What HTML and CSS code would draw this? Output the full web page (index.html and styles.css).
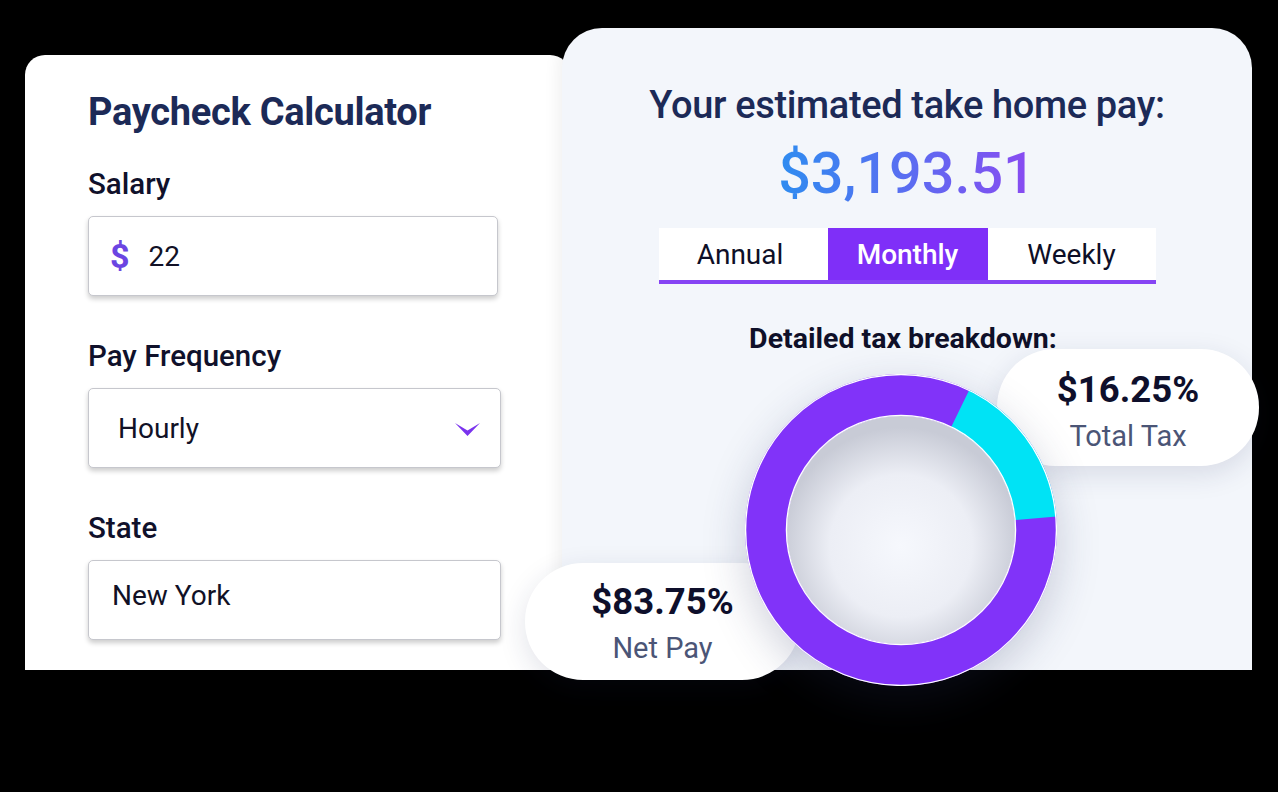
FILE: index.html
```html
<!DOCTYPE html>
<html lang="en">
<head>
<meta charset="utf-8">
<title>Paycheck Calculator</title>
<link rel="stylesheet" href="styles.css">
</head>
<body>
<div class="stage">
  <section class="calc-card">
    <h1 class="calc-title">Paycheck Calculator</h1>
    <div class="field">
      <div class="field-label">Salary</div>
      <div class="input input--salary">
        <span class="currency">$</span>
        <span class="input-value">22</span>
      </div>
    </div>
    <div class="field">
      <div class="field-label">Pay Frequency</div>
      <div class="input input--select">
        <span class="input-value">Hourly</span>
        <svg class="chevron" width="25" height="13" viewBox="0 0 25 13" aria-hidden="true">
          <path d="M0 0 L12.5 7.5 L25 0 L12.5 13 Z" fill="#7a33ee"/>
        </svg>
      </div>
    </div>
    <div class="field">
      <div class="field-label">State</div>
      <div class="input input--state">
        <span class="input-value">New York</span>
      </div>
    </div>
  </section>

  <section class="result-panel">
    <h2 class="result-title">Your estimated take home pay:</h2>
    <div class="result-amount">$3,193.51</div>
    <div class="tabs">
      <div class="tab">Annual</div>
      <div class="tab tab--active">Monthly</div>
      <div class="tab">Weekly</div>
    </div>
    <h3 class="breakdown-title">Detailed tax breakdown:</h3>
    <div class="donut">
      <svg width="312" height="312" viewBox="0 0 312 312" aria-hidden="true">
        <defs>
          <radialGradient id="hole" cx="50%" cy="57%" r="52%">
            <stop offset="0%" stop-color="#f6f8fd"/>
            <stop offset="60%" stop-color="#eceef5"/>
            <stop offset="100%" stop-color="#c8cbd6"/>
          </radialGradient>
        </defs>
        <circle cx="156" cy="156" r="135" fill="none" stroke="#8133f9" stroke-width="42"/>
        <circle cx="156" cy="156" r="135" fill="none" stroke="#00e3f5" stroke-width="42"
                stroke-dasharray="139 710" transform="rotate(-64 156 156)"/>
        <circle cx="156" cy="156" r="114" fill="url(#hole)"/>
        <circle cx="156" cy="156" r="114.6" fill="none" stroke="#ffffff" stroke-width="1.3"/>
        <circle cx="156" cy="156" r="155.4" fill="none" stroke="#ffffff" stroke-width="1.3"/>
      </svg>
    </div>
    <div class="pill pill--tax">
      <div class="pill-value">$16.25%</div>
      <div class="pill-label">Total Tax</div>
    </div>
    <div class="pill pill--net">
      <div class="pill-value">$83.75%</div>
      <div class="pill-label">Net Pay</div>
    </div>
  </section>
</div>
</body>
</html>
```

FILE: styles.css
```css
* {
  box-sizing: border-box;
}

html,
body {
  margin: 0;
  padding: 0;
  background: #000000;
}

body {
  width: 1278px;
  height: 792px;
  overflow: hidden;
  font-family: Roboto, "Noto Sans", "Liberation Sans", sans-serif;
}

.stage {
  display: flex;
  align-items: flex-end;
  padding: 28px 0 0 25px;
  height: 670px;
}

/* ---------- left card ---------- */
.calc-card {
  width: 545px;
  height: 615px;
  background: #ffffff;
  border-radius: 20px 20px 0 0;
  padding: 35px 0 0 63px;
  flex-shrink: 0;
}

.calc-title {
  margin: 0;
  font-size: 38px;
  line-height: 44px;
  font-weight: 700;
  color: #1c2a57;
  letter-spacing: -0.3px;
}

.field {
  margin-top: 43px;
}

.calc-title + .field {
  margin-top: 33px;
}

.field-label {
  font-size: 29.5px;
  line-height: 34px;
  font-weight: 500;
  color: #10112b;
  margin-bottom: 15px;
}

.input {
  display: flex;
  align-items: center;
  width: 413px;
  height: 80px;
  border: 1px solid #c6c7cd;
  border-radius: 5px;
  background: #ffffff;
  box-shadow: 0 3px 5px rgba(0, 0, 0, 0.2);
  font-size: 28px;
  color: #111126;
}

.input--salary {
  width: 410px;
  padding-left: 21px;
}

.currency {
  font-size: 34px;
  font-weight: 700;
  color: #6b45e2;
  margin-right: 19px;
}

.input--select {
  padding: 0 20px 0 29px;
  justify-content: space-between;
}

.chevron {
  display: block;
  margin-top: 2px;
}

.input--state {
  padding: 0 0 9px 23px;
}

/* ---------- right panel ---------- */
.result-panel {
  position: relative;
  width: 690px;
  height: 642px;
  margin-left: -8px;
  flex-shrink: 0;
  background: #f3f6fb;
  border-radius: 40px 40px 0 0;
  box-shadow: -6px 0 14px rgba(0, 0, 0, 0.05);
  padding-top: 55px;
  display: flex;
  flex-direction: column;
  align-items: center;
}

.result-title {
  margin: 0;
  font-size: 38px;
  line-height: 44px;
  font-weight: 500;
  color: #1c2a57;
  letter-spacing: -0.35px;
}

.result-amount {
  margin-top: 15px;
  font-size: 57.5px;
  line-height: 64px;
  font-weight: 500;
  background: linear-gradient(90deg, #2e8cf0 0%, #5a6df1 50%, #8b49f1 100%);
  -webkit-background-clip: text;
  background-clip: text;
  color: transparent;
}

.tabs {
  margin-top: 22px;
  display: grid;
  grid-template-columns: 169px 160px 168px;
  background: #ffffff;
  border-bottom: 4px solid #8644f4;
}

.tab {
  height: 52px;
  line-height: 54px;
  text-align: center;
  font-size: 28px;
  color: #0e0f27;
}

.tab:first-child {
  padding-right: 6px;
}

.tab--active {
  background: #7f2ff8;
  color: #ffffff;
  font-weight: 500;
}

.breakdown-title {
  margin: 40px 8px 0 0;
  font-size: 28.5px;
  line-height: 30px;
  font-weight: 700;
  color: #0f1029;
  letter-spacing: 0;
}

.donut {
  position: relative;
  z-index: 2;
  margin: 20px 13px 0 0;
  width: 312px;
  height: 312px;
  border-radius: 50%;
  box-shadow: 0 14px 44px rgba(40, 50, 95, 0.22);
}

.donut svg {
  display: block;
}

.pill {
  position: absolute;
  z-index: 1;
  height: 117px;
  border-radius: 58px;
  background: #ffffff;
  box-shadow: 0 8px 28px rgba(30, 40, 85, 0.13);
  display: flex;
  flex-direction: column;
  align-items: center;
  padding-top: 21px;
}

.pill--tax {
  left: 435px;
  top: 321px;
  width: 262px;
}

.pill--net {
  left: -37px;
  top: 535px;
  width: 275px;
  padding-top: 19px;
}

.pill-value {
  font-size: 36.5px;
  line-height: 40px;
  font-weight: 700;
  color: #0e0f2b;
}

.pill-label {
  margin-top: 9px;
  font-size: 29px;
  line-height: 34px;
  color: #4b5576;
}
```
